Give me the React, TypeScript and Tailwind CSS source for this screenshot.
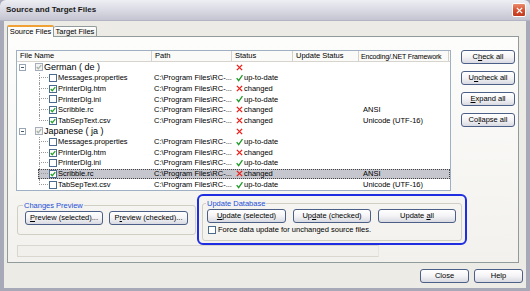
import React from 'react';

type FileRow = {
  name: string;
  checked: boolean;
  status: 'ok' | 'changed';
  enc?: string;
  selected?: boolean;
};

const groups: { name: string; files: FileRow[] }[] = [
  {
    name: 'German ( de )',
    files: [
      { name: 'Messages.properties', checked: false, status: 'ok' },
      { name: 'PrinterDlg.htm', checked: true, status: 'changed' },
      { name: 'PrinterDlg.ini', checked: false, status: 'ok' },
      { name: 'Scribble.rc', checked: true, status: 'changed', enc: 'ANSI' },
      { name: 'TabSepText.csv', checked: true, status: 'changed', enc: 'Unicode (UTF-16)' },
    ],
  },
  {
    name: 'Japanese ( ja )',
    files: [
      { name: 'Messages.properties', checked: false, status: 'ok' },
      { name: 'PrinterDlg.htm', checked: true, status: 'changed' },
      { name: 'PrinterDlg.ini', checked: false, status: 'ok' },
      { name: 'Scribble.rc', checked: true, status: 'changed', enc: 'ANSI', selected: true },
      { name: 'TabSepText.csv', checked: false, status: 'ok', enc: 'Unicode (UTF-16)' },
    ],
  },
];

const Cross = () => (
  <svg viewBox="0 0 8 8" className="w-[7px] h-[7px] shrink-0">
    <path d="M1 1 L7 7 M7 1 L1 7" stroke="#e8231f" strokeWidth="1.6" />
  </svg>
);

const Tick = () => (
  <svg viewBox="0 0 8 8" className="w-[7px] h-[8px] shrink-0">
    <path d="M0.8 4.2 L3 7 L7.4 0.6" stroke="#1f9a26" strokeWidth="1.5" fill="none" />
  </svg>
);

const Check = ({ checked, gray }: { checked?: boolean; gray?: boolean }) => (
  <span
    className={`w-[8px] h-[8px] shrink-0 flex items-center justify-center border ${
      gray ? 'border-[#a6aebb] bg-[#f4f4f4]' : 'border-[#4b6a8f] bg-white'
    }`}
  >
    {checked && (
      <svg viewBox="0 0 8 8" className="w-[6px] h-[6px]">
        <path
          d="M1 4 L3 6.3 L7 1.4"
          stroke={gray ? '#a7b3a7' : '#21a42a'}
          strokeWidth="1.6"
          fill="none"
        />
      </svg>
    )}
  </span>
);

const XpButton = ({ children, className = '' }: { children: React.ReactNode; className?: string }) => (
  <button
    className={`h-[14px] flex items-center justify-center rounded-[3px] border border-[#4c5f86] bg-linear-to-b from-white via-[#f4f4f6] to-[#d9dae2] text-[7.5px] leading-none text-black ${className}`}
  >
    <span className="whitespace-pre">{children}</span>
  </button>
);

const cols = 'flex items-center h-[10.67px] text-[7.5px] leading-none text-black';

const StatusCell = ({ status }: { status: 'ok' | 'changed' }) => (
  <div className="w-[61px] flex items-center gap-[1px] pl-[3px]">
    {status === 'ok' ? <Tick /> : <Cross />}
    <span>{status === 'ok' ? 'up-to-date' : 'changed'}</span>
  </div>
);

const GroupRow = ({ name }: { name: string }) => (
  <div className={cols}>
    <div className="w-[136px] flex items-center">
      <span className="ml-[2px] w-[7px] h-[7px] border border-[#97a5b5] bg-white flex items-center justify-center">
        <span className="w-[3px] h-[1px] bg-[#4a5868]" />
      </span>
      <span className="ml-[9px]">
        <Check checked gray />
      </span>
      <span className="ml-[1px] text-[9px]">{name}</span>
    </div>
    <div className="w-[80px]" />
    <div className="w-[61px] pl-[3px] flex items-center">
      <Cross />
    </div>
  </div>
);

const ChildRow = ({ file, last }: { file: FileRow; last: boolean }) => (
  <div className={cols}>
    <div className="w-[21px] h-full" />
    <div
      className={`flex-1 h-full flex items-center ${
        file.selected ? 'bg-[#c5c6ce] outline outline-dotted outline-[#444] -outline-offset-1' : ''
      }`}
    >
      <div className="w-[115px] h-full flex items-center">
        <div className="ml-[1px] w-[9px] h-full flex flex-col">
          <div className="h-1/2 border-l border-b border-dotted border-[#9a9a9a]" />
          <div className={`h-1/2 ${last ? '' : 'border-l border-dotted border-[#9a9a9a]'}`} />
        </div>
        <span className="ml-[1px]">
          <Check checked={file.checked} />
        </span>
        <span className="ml-[1px] whitespace-nowrap">{file.name}</span>
      </div>
      <div className="w-[80px] pl-[1px] whitespace-nowrap">C:\Program Files\RC-...</div>
      <StatusCell status={file.status} />
      <div className="w-[66px]" />
      <div className="pl-[3px] whitespace-nowrap">{file.enc ?? ''}</div>
    </div>
  </div>
);

const HeaderCell = ({ label, w, tight }: { label: string; w: string; tight?: boolean }) => (
  <div
    className={`${w} h-full flex items-center border-r border-[#d3d1c9] whitespace-nowrap ${
      tight ? 'pl-[2px] text-[7px] tracking-[-0.15px]' : 'pl-[3px]'
    }`}
  >
    {label}
  </div>
);

export default function App() {
  return (
    <div className="w-[530px] h-[291px] flex flex-col bg-[#a7a9b9] font-['Liberation_Sans',Arial,sans-serif] overflow-hidden">
      {/* Title bar */}
      <div className="h-[21px] shrink-0 flex items-center justify-between pl-[6px] pr-[4px] rounded-t-[6px] bg-linear-to-b from-[#eeeff4] via-[#d9dae3] to-[#c4c5d1] border-b border-[#b2b4c4]">
        <span className="text-[8px] font-bold text-[#1a1a1a]">Source and Target Files</span>
        <span className="w-[14px] h-[14px] rounded-[2px] border border-white bg-linear-to-b from-[#e98a6c] via-[#d8502e] to-[#c2391e] flex items-center justify-center">
          <svg viewBox="0 0 8 8" className="w-[7px] h-[7px]">
            <path d="M1 1 L7 7 M7 1 L1 7" stroke="white" strokeWidth="1.6" />
          </svg>
        </span>
      </div>

      {/* Body */}
      <div className="flex-1 mx-[4px] mb-[3px] bg-[#ecebe6] flex flex-col pl-[3px]">
        {/* Tabs */}
        <div className="mt-[4px] h-[11px] flex items-end text-[7.5px] leading-none">
          <div className="relative z-10 w-[47px] h-[12px] -mb-[1px] flex items-center justify-center bg-[#fcfcfb] border border-b-0 border-[#919b9c] border-t-2 border-t-[#f0a133] rounded-t-[2px]">
            Source Files
          </div>
          <div className="w-[43px] h-[10px] flex items-center justify-center bg-linear-to-b from-white to-[#ecebe4] border border-b-0 border-l-0 border-[#919b9c] rounded-t-[2px]">
            Target Files
          </div>
        </div>

        {/* Tab panel */}
        <div className="w-[512px] border border-[#919b9c] bg-linear-to-b from-[#fdfdfc] to-[#f2f1ed] pt-[13px] pl-[8px] pb-[5px]">
          <div className="flex">
            {/* List view */}
            <div className="w-[435px] h-[141px] border border-[#9fb0c4] bg-white flex flex-col">
              <div className="h-[11px] flex text-[7.5px] leading-none bg-[#fafaf8] border-b border-[#d6d4cc]">
                <HeaderCell label="File Name" w="w-[135px]" />
                <HeaderCell label="Path" w="w-[80px]" />
                <HeaderCell label="Status" w="w-[61px]" />
                <HeaderCell label="Update Status" w="w-[66px]" />
                <HeaderCell label="Encoding/.NET Framework" w="w-[90px]" tight />
              </div>
              {groups.map((g) => (
                <React.Fragment key={g.name}>
                  <GroupRow name={g.name} />
                  {g.files.map((f, i) => (
                    <ChildRow key={f.name} file={f} last={i === g.files.length - 1} />
                  ))}
                </React.Fragment>
              ))}
            </div>

            {/* Right buttons */}
            <div className="ml-[10px] flex flex-col gap-[7px]">
              <XpButton className="w-[54px]">
                C<u>h</u>eck all
              </XpButton>
              <XpButton className="w-[54px]">
                U<u>n</u>check all
              </XpButton>
              <XpButton className="w-[54px]">
                <u>E</u>xpand all
              </XpButton>
              <XpButton className="w-[54px]">
                Co<u>l</u>lapse all
              </XpButton>
            </div>
          </div>

          {/* Lower area */}
          <div className="mt-[3px] flex">
            {/* Changes Preview */}
            <div className="ml-[1px] mt-[11px] w-[179px] h-[30px] border border-[#d0cfc4] rounded-[3px]">
              <div className="-mt-[5px] ml-[5px] w-fit px-[1px] bg-[#f3f2ee] text-[7.5px] leading-[9px] text-[#1d4ed8]">
                Changes Preview
              </div>
              <div className="mt-[1px] pl-[7px] flex gap-[6px]">
                <XpButton className="w-[78px]">
                  <u>P</u>review (selected)...
                </XpButton>
                <XpButton className="w-[79px]">
                  P<u>r</u>eview (checked)...
                </XpButton>
              </div>
            </div>

            {/* Update Database (highlighted) */}
            <div className="ml-[1px] w-[270px] h-[51px] border-2 border-[#1f2ee0] rounded-[6px] px-[3px] pt-[7px]">
              <div className="h-[38px] border border-[#d0cfc4] rounded-[3px]">
                <div className="-mt-[5px] ml-[3px] w-fit px-[1px] bg-[#f3f2ee] text-[7.5px] leading-[9px] text-[#1d4ed8]">
                  Update Database
                </div>
                <div className="mt-[1px] pl-[4px] flex gap-[7px]">
                  <XpButton className="w-[79px]">
                    <u>U</u>pdate (selected)
                  </XpButton>
                  <XpButton className="w-[78px]">
                    Up<u>d</u>ate (checked)
                  </XpButton>
                  <XpButton className="w-[78px]">
                    Update <u>a</u>ll
                  </XpButton>
                </div>
                <div className="mt-[3px] pl-[5px] flex items-center gap-[2px] text-[7.5px] leading-none">
                  <Check />
                  <span>Force data update for unchanged source files.</span>
                </div>
              </div>
            </div>
          </div>

          {/* Status box */}
          <div className="ml-[1px] w-[362px] h-[12px] border border-[#d9d8d0] border-r-[#e6e5df] bg-[#f1f0ec]" />
        </div>

        {/* Dialog buttons */}
        <div className="mt-[6px] flex justify-end gap-[5px] pr-[3px]">
          <XpButton className="w-[49px]">Close</XpButton>
          <XpButton className="w-[49px]">Help</XpButton>
        </div>
      </div>
    </div>
  );
}
